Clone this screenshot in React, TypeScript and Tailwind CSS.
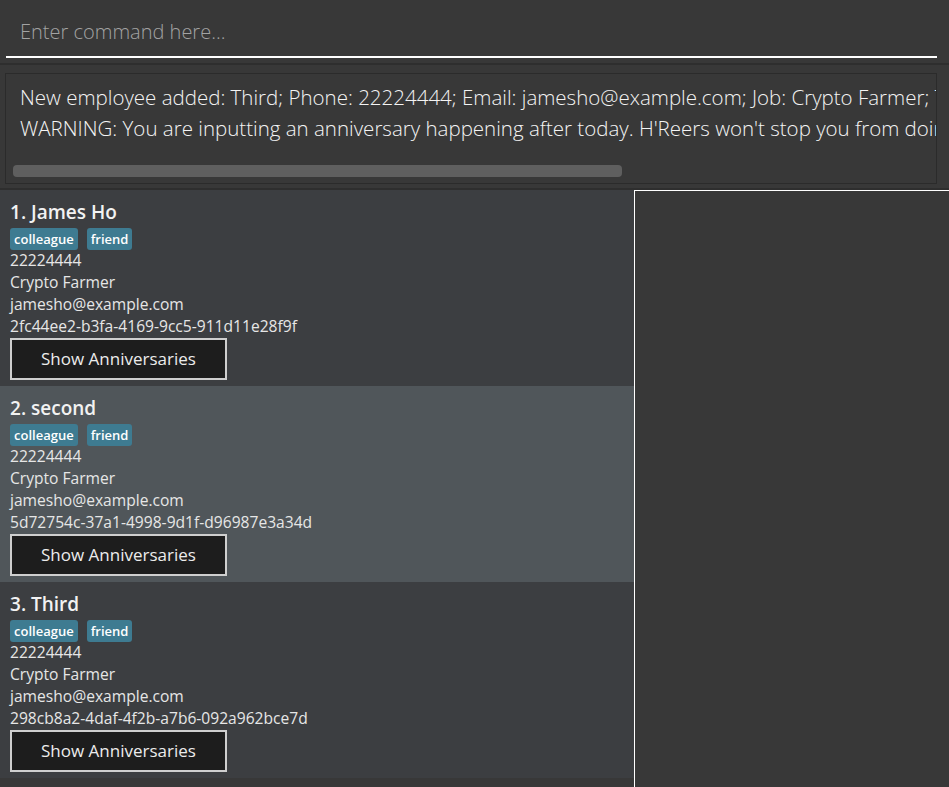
import React from 'react'

type Person = { name: string; id: string }

const people: Person[] = [
  { name: 'James Ho', id: '2fc44ee2-b3fa-4169-9cc5-911d11e28f9f' },
  { name: 'second', id: '5d72754c-37a1-4998-9d1f-d96987e3a34d' },
  { name: 'Third', id: '298cb8a2-4daf-4f2b-a7b6-092a962bce7d' },
]

const font = { fontFamily: '"Open Sans", "Noto Sans", sans-serif' }

function Card({ p, index, selected }: { p: Person; index: number; selected: boolean }) {
  return (
    <div className={`h-[196px] pl-[10px] ${selected ? 'bg-[#50565a]' : 'bg-[#3c3e41]'}`}>
      <div className="pt-[10px] text-[19px] font-semibold leading-[24px] text-[#f2f2f2]">{index}. {p.name}</div>
      <div className="mt-[4px] flex gap-[9px]">
        <span className="h-[22px] rounded-[3px] bg-[#3e7b91] px-[4px] text-[13px] font-semibold leading-[22px] text-white">colleague</span>
        <span className="h-[22px] rounded-[3px] bg-[#3e7b91] px-[4px] text-[13px] font-semibold leading-[22px] text-white">friend</span>
      </div>
      <div className="text-[15.6px] leading-[22px] text-[#e6e6e6]">
        <div className="-mt-[1px]">22224444</div>
        <div>Crypto Farmer</div>
        <div>jamesho@example.com</div>
        <div>{p.id}</div>
      </div>
      <button className="mt-[1px] h-[42px] w-[217px] border-2 border-[#cfcfcf] bg-[#1d1d1d] text-[17px] text-[#ececec]">
        Show Anniversaries
      </button>
    </div>
  )
}

export default function App() {
  return (
    <div className="flex h-[787px] w-[949px] flex-col overflow-hidden bg-[#383838]" style={font}>
      <div className="ml-[6px] mr-[12px] h-[58px] border-b-2 border-white pl-[14px] pt-[17px] text-[20px] font-light leading-[30px] text-[#a3a3a3]">
        Enter command here...
      </div>
      <div className="mt-[5px] h-[2px] bg-[#2e2e2e]" />
      <div className="pl-[5px] pr-[12px] pt-[8px]">
        <div className="h-[111px] overflow-hidden border border-[#2b2b2b] bg-[#383838] pl-[14px] pt-[8px]">
          <div className="whitespace-nowrap text-[20.5px] font-light leading-[31px] text-[#f4f4f4]">
            <div>New employee added: Third; Phone: 22224444; Email: jamesho@example.com; Job: Crypto Farmer; Tags: [colleague][friend]</div>
            <div>WARNING: You are inputting an anniversary happening after today. H'Reers won't stop you from doing this.</div>
          </div>
          <div className="mt-[21px] h-[12px] w-[609px] -translate-x-[7px] rounded-[4px] bg-[#5f5f5f]" />
        </div>
      </div>
      <div className="mt-[4px] h-[2px] bg-[#2e2e2e]" />
      <div className="flex flex-1">
        <div className="w-[634px] bg-[#383838]">
          {people.map((p, i) => (
            <Card key={p.id} p={p} index={i + 1} selected={i === 1} />
          ))}
        </div>
        <div className="flex-1 border-l border-t border-white bg-[#383838]" />
      </div>
    </div>
  )
}
